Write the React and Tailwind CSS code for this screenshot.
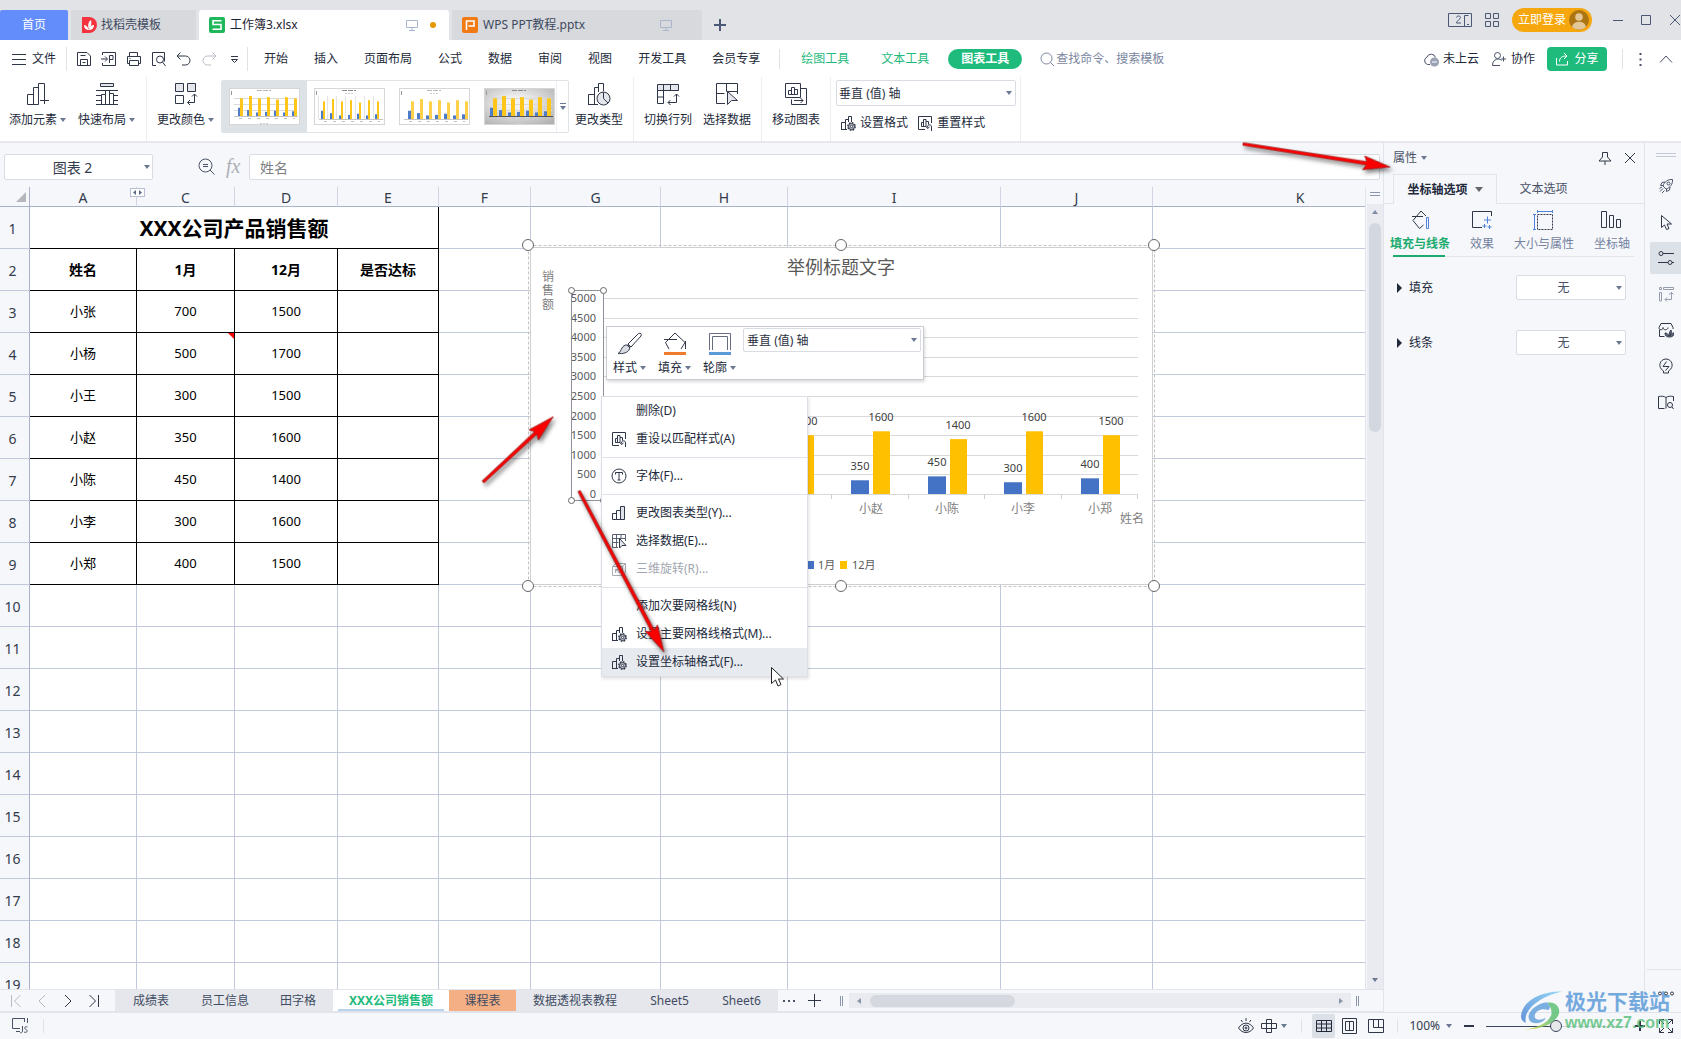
import React from 'react';

const MENUS = ['开始', '插入', '页面布局', '公式', '数据', '审阅', '视图', '开发工具', '会员专享'];

const COLUMNS = [
  { id: 'A', width: 'w-[107px]' },
  { id: 'C', width: 'w-[98px]' },
  { id: 'D', width: 'w-[103px]' },
  { id: 'E', width: 'w-[101px]' },
  { id: 'F', width: 'w-[92px]' },
  { id: 'G', width: 'w-[130px]' },
  { id: 'H', width: 'w-[127px]' },
  { id: 'I', width: 'w-[213px]' },
  { id: 'J', width: 'w-[152px]' },
  { id: 'K', width: '' },
];

const SALES = [
  { name: '小张', jan: 700, dec: 1500 },
  { name: '小杨', jan: 500, dec: 1700 },
  { name: '小王', jan: 300, dec: 1500 },
  { name: '小赵', jan: 350, dec: 1600 },
  { name: '小陈', jan: 450, dec: 1400 },
  { name: '小李', jan: 300, dec: 1600 },
  { name: '小郑', jan: 400, dec: 1500 },
];

const ROW_COUNT = 19;

const SHEETS = [
  { name: '成绩表', cls: 'w-[72px]' },
  { name: '员工信息', cls: 'w-[76px]' },
  { name: '田字格', cls: 'w-[70px]' },
  { name: 'XXX公司销售额', cls: 'w-[116px] bg-white font-bold text-[#1fbb7d]', active: true },
  { name: '课程表', cls: 'w-[67px] bg-[#f4b084]' },
  { name: '数据透视表教程', cls: 'w-[118px]' },
  { name: 'Sheet5', cls: 'w-[71px]' },
  { name: 'Sheet6', cls: 'w-[73px]' },
];

const INK = '#2f3648';

function Icon({ size = 16, color = INK, stroke = 1, className = '', children }) {
  return (
    <svg
      width={size}
      height={size}
      viewBox={`0 0 ${size} ${size}`}
      fill="none"
      stroke={color}
      strokeWidth={stroke}
      className={`shrink-0 ${className}`}
      aria-hidden="true"
    >
      {children}
    </svg>
  );
}

function Caret({ className = '' }) {
  return (
    <svg width="6" height="4" viewBox="0 0 6 4" className={`shrink-0 ${className}`} aria-hidden="true">
      <path d="M0 0h6L3 4z" fill="#6b7892" />
    </svg>
  );
}

function Divider({ className = '' }) {
  return <div className={`w-px shrink-0 bg-[#dfe2e7] ${className}`} />;
}

function Dropdown({ label, value, className = '', selectClass = '' }) {
  return (
    <div className={`relative ${className}`}>
      <select
        aria-label={label}
        className={`block h-full w-full appearance-none rounded-[2px] border border-[#d9dce2] bg-white text-[12px] text-[#2b3142] outline-none ${selectClass}`}
      >
        <option>{value}</option>
      </select>
      <Caret className="pointer-events-none absolute right-[4px] top-1/2 -translate-y-1/2" />
    </div>
  );
}

/* ---------- icons ---------- */

const GEAR = (
  <>
    <circle cx="11.5" cy="11.5" r="3.6" fill="#c9cdd8" stroke={INK} strokeWidth="1.6" strokeDasharray="1.7 1.1" />
    <circle cx="11.5" cy="11.5" r="2.9" fill="#dfe2e8" />
    <circle cx="11.5" cy="11.5" r="1.2" fill="#fff" />
  </>
);

const BarsGearIcon = () => (
  <Icon>
    <path d="M1.5 14.5V7.5h4M5.5 14.5V4.5h3M8.5 7V1.5h3V7M1 14.5h6" />
    {GEAR}
  </Icon>
);

const ResetStyleIcon = () => (
  <Icon>
    <path d="M8 14.5H1.5v-13h13V8" />
    <path d="M4.5 11.500V7.500h2v4zM6.500 11.500v-7H9v7zM9 6.500h2.500v3" />
    <path d="M10.500 12.500v-.5c0-3 4-3 4 0v4M9 11.500l1.500 2 2-1.500" />
  </Icon>
);

const ChartTypeIcon = () => (
  <Icon>
    <path d="M1.500 14.500v-6h4v6zM5.500 14.500v-9h4v9zM9.500 14.500v-13h4v13z" />
    <path d="M10 2h3v12h-3z" fill="#dfe2e8" stroke="none" />
  </Icon>
);

const SelectDataSmallIcon = () => (
  <Icon color="#596175">
    <path d="M7 14.500H1.500v-13h13V8M1.500 5.500h13M1.500 9.500h6M5.500 1.500v13M10 1.500v4" />
    <path d="M8.500 5.500v9.500l2.500-2.500h4z" fill="#e4e6ec" stroke={INK} />
  </Icon>
);

const FontIcon = () => (
  <Icon>
    <circle cx="8" cy="8" r="7" />
    <path d="M4.500 6.500v-2h7v2M8 4.500v7.500M6.500 12h3" />
  </Icon>
);

const RotateIcon = () => (
  <Icon color="#a9adb6">
    <path d="M1.500 5.500h10v9h-10zM1.500 5.500l3-3h10v9l-3 3M11.500 5.500l3-3" />
    <path d="M4.500 12V8.500H8M4.500 8.500L9 12" />
  </Icon>
);

const RIBBON_ICONS = {
  add: (
    <Icon size={24}>
      <path d="M1.500 22.500V12.500h6M7.500 22.500V5.500h5M1.500 22.500h11v-21h6v13M18.500 14v8M14 18.500h9" />
    </Icon>
  ),
  layout: (
    <Icon size={24}>
      <path d="M5.500 1.500h13v3h-13z" fill="#e4e6ec" />
      <path d="M1 8.500h22M1 13.500h5M1 18.500h5M1 22.500h22M6.500 22.500V12.500h4v10M10.500 12.500V8.500h4v14M14.500 11.500h4v11M18 13.500h5M18 18.500h5" />
    </Icon>
  ),
  color: (
    <Icon size={24}>
      <path d="M1.500 1.500h8v8h-8zM13.500 1.500h8v8h-8z" fill="#e4e6ec" />
      <path d="M1.500 13.500h8v8h-8zM20.500 12v8.500h-7M18 14.500l2.500-2.500 2.500 2.500M16 18l-2.500 2.500L16 23" />
    </Icon>
  ),
  type: (
    <Icon size={24}>
      <path d="M1.500 22V12.500h6M7.500 22V5.500h4M1 22.500h10M11.500 10V1.500h5V9" />
      <circle cx="16.500" cy="16.500" r="6.500" fill="#e4e6ec" />
      <path d="M16.500 10v6.500l4.500 4.500" />
    </Icon>
  ),
  swap: (
    <Icon size={24}>
      <path d="M1.500 8.500h6v13h-6z" fill="#fff" />
      <path d="M1.500 2.500h21v6h-21z" fill="#e4e6ec" />
      <path d="M7.500 2.500v6M14.500 2.500v6M1.500 15h6M20.500 12v8.500H12M18 14.500l2.500-2.500 2.500 2.500M14.500 18L12 20.500l2.500 2.500" />
    </Icon>
  ),
  select: (
    <Icon size={24}>
      <path d="M10 21.500H1.500v-20h21V12M1.500 11.500h8M11.500 1.500v8h11" />
      <path d="M12.500 9.500v13l4-4h6z" fill="#e4e6ec" />
    </Icon>
  ),
  move: (
    <Icon size={24}>
      <path d="M16.500 6.500h6v16h-15v-5" />
      <path d="M1.500 1.500h15v14h-15z" fill="#fff" />
      <path d="M4.500 12.500v-4h3v4zM7.500 12.500v-7h3v7zM10.500 12.500v-5h3v5z" />
      <path d="M10 18.500h9M16.500 16l2.500 2.500-2.500 2.500" />
    </Icon>
  ),
};

/* ---------- title bar and menu ---------- */

function ScreenIcon() {
  return (
    <Icon size={12} color="#aab4cc">
      <path d="M.5 1.500h11v7H.5zM6 8.500v3M3 11.500h6" />
    </Icon>
  );
}

function TitleBar() {
  return (
    <header className="flex h-10 shrink-0 items-end bg-[#e1e3e7] text-[12px] text-[#404a60]">
      <button className="h-[30px] w-[68px] shrink-0 rounded-t-[2px] bg-[#628dfa] text-white">首页</button>
      <button className="ml-[3px] flex h-[30px] w-[125px] shrink-0 items-center gap-[4px] rounded-t-[2px] bg-[#d7d9dd] pl-[10px]">
        <svg width="16" height="16" viewBox="0 0 16 16" aria-hidden="true">
          <path d="M1 0h7a8 8 0 0 1 0 16H1z" fill="#f5333f" />
          <path d="M8 13C5 13 3 11 3 8c2 0 4 2 5 5zM8 12C6 8 8 4 10 3c1 3 0 7-2 9zM8 13c1-3 2-5 5-5 0 3-2 5-5 5z" fill="#fff" />
        </svg>
        找稻壳模板
      </button>
      <button className="ml-[3px] flex h-[30px] w-[250px] shrink-0 items-center rounded-t-[3px] bg-white px-[10px] text-[#1c2333]">
        <svg width="16" height="16" viewBox="0 0 16 16" className="mr-[5px]" aria-hidden="true">
          <rect width="16" height="16" rx="2" fill="#1eb75a" />
          <path d="M12.500 3.800H4v3.700h8v4.700H3.500" fill="none" stroke="#fff" strokeWidth="1.600" />
        </svg>
        工作簿3.xlsx
        <span className="ml-auto"><ScreenIcon /></span>
        <span className="ml-[12px] mr-[3px] h-[6px] w-[6px] rounded-full bg-[#e59700]" />
      </button>
      <button className="ml-[3px] flex h-[30px] w-[250px] shrink-0 items-center rounded-t-[3px] bg-[#d7d9dd] px-[10px]">
        <svg width="16" height="16" viewBox="0 0 16 16" className="mr-[5px]" aria-hidden="true">
          <rect width="16" height="16" rx="2" fill="#f27a13" />
          <path d="M4.500 13V4h7.500v5H6.500" fill="none" stroke="#fff" strokeWidth="1.600" />
        </svg>
        WPS PPT教程.pptx
        <span className="ml-auto mr-[20px]"><ScreenIcon /></span>
      </button>
      <button className="ml-[12px] flex h-[30px] items-center" aria-label="新建">
        <Icon size={12} color="#4a5875" stroke={2}>
          <path d="M6 0v12M0 6h12" />
        </Icon>
      </button>

      <div className="ml-auto flex h-10 items-center text-[#4a5875]">
        <svg width="24" height="14" viewBox="0 0 24 14" fill="none" stroke="#4a5875" aria-hidden="true">
          <path d="M.5.5h23v13H.5zM16.500 2.500v11M16.500 2.500h4M19 11.500h2" />
          <path d="M8.500 4.500c0-2 4-2 4 0 0 1.500-4 3.500-4 5.500h4.500" />
        </svg>
        <Icon size={14} color="#4a5875" className="ml-[13px]">
          <path d="M.5.5h5v5h-5zM8.500.5h5v5h-5zM.5 8.500h5v5h-5zM8.500 8.500h5v5h-5z" />
        </Icon>
        <button className="ml-[13px] flex h-6 w-[80px] items-center gap-[3px] rounded-full bg-[#f6a70d] pl-[6px] text-white">
          立即登录
          <svg width="20" height="20" viewBox="0 0 20 20" aria-hidden="true">
            <circle cx="10" cy="10" r="10" fill="#ad7512" />
            <circle cx="10" cy="7" r="3.800" fill="#e2c695" />
            <path d="M3 17c1-7 13-7 14 0a10 10 0 0 1-14 0z" fill="#e2c695" />
          </svg>
        </button>
        <Divider className="ml-[8px] h-5 bg-[#cbcfd7]" />
        <button className="ml-[12px]" aria-label="最小化">
          <Icon size={10} color="#4a5875"><path d="M0 5.500h10" /></Icon>
        </button>
        <button className="ml-[18px]" aria-label="最大化">
          <Icon size={10} color="#4a5875"><path d="M.5.5h9v9h-9z" /></Icon>
        </button>
        <button className="ml-[18px]" aria-label="关闭">
          <Icon size={12} color="#4a5875"><path d="M1 1l10 10M11 1L1 11" /></Icon>
        </button>
      </div>
    </header>
  );
}

function MenuBar() {
  return (
    <nav className="flex h-[37px] shrink-0 items-center whitespace-nowrap bg-white pt-px text-[12px] text-[#22293a]">
      <button className="ml-[12px] flex items-center gap-[6px]">
        <Icon size={14}><path d="M0 2.500h14M0 7.500h14M0 12.500h14" /></Icon>
        文件
      </button>
      <Divider className="ml-[10px] h-6" />
      <div className="ml-[9px] flex items-center gap-[9px]">
        <button aria-label="保存">
          <Icon><path d="M1.500 1.500h9.500l3.500 3.500v9.500H1.500zM4.500 14.500V8.500h7v6M6.500 11.500h3M4.500 4.500h5" /></Icon>
        </button>
        <button aria-label="输出为PDF">
          <Icon><path d="M1.500 4V1.500h13v13h-13V12M0 8h6M4 5.500L6.500 8 4 10.500M8.500 12V4.500h3.500v4H8.500" /></Icon>
        </button>
        <button aria-label="打印">
          <Icon><path d="M3.500 5.500v-4h8v4M3.500 12.500h-2v-7h13v7h-2M3.500 9.500h9v5h-9zM3.500 7.500h1" /></Icon>
        </button>
        <button aria-label="打印预览">
          <Icon><path d="M5 14.500H1.500v-13h12v9" /><circle cx="9" cy="8.500" r="3.500" /><path d="M11.500 11l3 4" /></Icon>
        </button>
        <button aria-label="撤销">
          <Icon><path d="M4.500 1.500L1 5l3.500 3.500M1 5h8.500a4.500 4.500 0 0 1 0 9H6" /></Icon>
        </button>
        <button aria-label="恢复">
          <Icon color="#b9bdc6"><path d="M11.500 1.500L15 5l-3.500 3.500M15 5H6.500a4.500 4.500 0 0 0 0 9H10" /></Icon>
        </button>
        <button aria-label="更多">
          <Icon><path d="M5 5.500h7M5.500 8.500h6l-3 3z" /></Icon>
        </button>
      </div>
      <Divider className="ml-[5px] h-6" />
      <div className="ml-[16px] flex gap-[26px]">
        {MENUS.map((m) => (
          <button key={m}>{m}</button>
        ))}
      </div>
      <Divider className="ml-[19px] h-5" />
      <button className="ml-[21px] text-[#1fbb7d]">绘图工具</button>
      <button className="ml-[32px] text-[#1fbb7d]">文本工具</button>
      <button className="ml-[19px] h-5 w-[74px] rounded-full bg-[#1fbb7d] font-bold text-white">图表工具</button>
      <button className="ml-[18px] flex items-center gap-[2px] text-[#7b86a0]">
        <Icon size={14} color="#7b86a0"><circle cx="6.500" cy="6.500" r="5.500" /><path d="M10.500 10.500l3.500 3.500" /></Icon>
        查找命令、搜索模板
      </button>

      <button className="ml-auto flex items-center gap-[4px]">
        <Icon color="#4a5268">
          <path d="M7 13.500H4.500a4 4 0 0 1-.5-7.500 4.500 4.500 0 0 1 8.500.5" />
          <circle cx="11.500" cy="11" r="4.500" fill="#9aa1b5" stroke="none" />
          <path d="M9 11h5" stroke="#fff" />
        </Icon>
        未上云
      </button>
      <button className="ml-[12px] flex items-center gap-[4px]">
        <Icon color="#4a5268">
          <circle cx="6.500" cy="4.500" r="3" />
          <path d="M9 14.500H1.500c0-8 8-7 9-5M12.500 5.500v5M10 8h5" />
        </Icon>
        协作
      </button>
      <button className="ml-[12px] flex h-6 w-[60px] items-center justify-center gap-[5px] rounded-[4px] bg-[#1fbb7d] text-white">
        <Icon size={14} color="#fff"><path d="M1.500 6v7h11V9M4.500 9.500c0-4 3-5.500 7-5.500M9 1l3 3-3 3" /></Icon>
        分享
      </button>
      <Divider className="ml-[15px] h-5" />
      <button className="ml-[16px]" aria-label="更多选项">
        <svg width="3" height="13" viewBox="0 0 3 13" fill="#4a5268" aria-hidden="true">
          <path d="M.5 0h2v2h-2zM.5 5.500h2v2h-2zM.5 11h2v2h-2z" />
        </svg>
      </button>
      <button className="ml-[17px] mr-[8px]" aria-label="折叠功能区">
        <Icon size={14} color="#4a5268"><path d="M1 10.500l6-6.500 6 6.500" /></Icon>
      </button>
    </nav>
  );
}

/* ---------- ribbon ---------- */

function RibbonButton({ icon, label, caret, className = '' }) {
  return (
    <button className={`flex shrink-0 flex-col items-center pt-[5px] ${className}`}>
      {RIBBON_ICONS[icon]}
      <span className="mt-[4px] flex items-center gap-[3px] leading-5">
        {label}
        {caret && <Caret />}
      </span>
    </button>
  );
}

const THUMBS = [
  { id: 1, start: 9, base: 28, blue: 2, gold: 3, title: '#b5b5b5', rows: true },
  { id: 2, start: 7, base: 31, blue: 2, gold: 2, title: '#8d8d8d', columns: true },
  { id: 3, start: 9, base: 31, blue: 3, gold: 3, title: '#b5b5b5', hatch: true },
  { id: 4, start: 6, base: 28, blue: 3, gold: 4, title: '#8d8d8d', rows: true, dark: true },
];

function StyleThumb({ thumb }) {
  const { start, base, blue, gold } = thumb;
  return (
    <svg width="71" height="37" viewBox="0 0 71 37" aria-hidden="true">
      <defs>
        <radialGradient id="thumbGlow" cx="0.450" cy="0.400" r="0.750">
          <stop offset="0.200" stopColor="#f2f2f2" />
          <stop offset="1" stopColor="#b0b0b0" />
        </radialGradient>
      </defs>
      <rect x="0.500" y="0.500" width="70" height="36" fill={thumb.dark ? 'url(#thumbGlow)' : '#fff'} stroke="#d6d6d6" />
      <path d="M28 2.500h14" stroke={thumb.title} strokeDasharray="5 1" />
      {base === 31 && <path d="M31 5.500h8" stroke="#d0d0d0" strokeDasharray="2 1" />}
      <path d="M2.500 3v4" stroke="#999" />
      {thumb.rows && <path d="M5 10.500h63M5 16.500h63M5 22.500h63" stroke="#dadada" />}
      {thumb.columns && <path d="M4.500 8v23M13.500 8v23M22.500 8v23M31.500 8v23M41.500 8v23M50.500 8v23M59.500 8v23" stroke="#e3e3e3" />}
      {SALES.map((s, i) => (
        <g key={s.name}>
          <rect x={start + i * 9} y={base - s.jan / 85} width={blue} height={s.jan / 85} fill="#4f7cc8" />
          <rect x={start + blue + i * 9} y={base - s.dec / 85} width={gold} height={s.dec / 85} fill={thumb.hatch ? '#ffd04a' : '#ffc61a'} />
        </g>
      ))}
      <path d={`M5 ${base + 0.5}h64`} stroke={thumb.dark ? '#555' : '#c4c4c4'} />
      <path d={`M10 ${base + 2.5}h56`} stroke="#c4c4c4" strokeDasharray="3 6" />
      {base === 28 && <path d="M31 35.500h8" stroke="#cfcfcf" strokeDasharray="2 1" />}
    </svg>
  );
}

function Ribbon() {
  return (
    <div className="flex h-[66px] shrink-0 border-b-2 border-[#e6e8eb] bg-white pl-[9px] text-[12px] text-[#22293a]">
      <RibbonButton icon="add" label="添加元素" caret />
      <RibbonButton icon="layout" label="快速布局" caret className="ml-[12px]" />
      <Divider className="ml-[11px] bg-[#eceef1]" />
      <RibbonButton icon="color" label="更改颜色" caret className="ml-[10px]" />
      <div className="ml-[7px] mt-[3px] flex h-[53px] w-[348px] shrink-0 items-stretch rounded-[2px] border border-[#dfe2e7]">
        {THUMBS.map((t) => (
          <button
            key={t.id}
            aria-label={`样式 ${t.id}`}
            className={`flex items-center justify-center ${t.id === 1 ? 'w-[85px] bg-[#dde2e7]' : 'w-[85px]'} ${t.id === 4 ? 'pr-px' : ''}`}
          >
            <StyleThumb thumb={t} />
          </button>
        ))}
        <button className="-ml-[6px] flex flex-1 items-center justify-center border-l border-[#eceef1]" aria-label="更多样式">
          <svg width="6" height="7" viewBox="0 0 6 7" aria-hidden="true">
            <path d="M0 0h6v1H0zM0 3h6L3 7z" fill="#6b7892" />
          </svg>
        </button>
      </div>
      <RibbonButton icon="type" label="更改类型" className="ml-[6px]" />
      <Divider className="ml-[10px] bg-[#eceef1]" />
      <RibbonButton icon="swap" label="切换行列" className="ml-[10px]" />
      <RibbonButton icon="select" label="选择数据" className="ml-[11px]" />
      <Divider className="ml-[10px] bg-[#eceef1]" />
      <RibbonButton icon="move" label="移动图表" className="ml-[10px]" />
      <Divider className="ml-[10px] bg-[#eceef1]" />
      <div className="ml-[5px] mt-[3px]">
        <Dropdown label="图表元素" value="垂直 (值) 轴" className="h-[26px] w-[180px]" selectClass="pl-[2px] pt-px" />
        <div className="mt-[7px] flex gap-[9px] pl-[4px]">
          <button className="flex items-center gap-[4px] leading-5"><BarsGearIcon />设置格式</button>
          <button className="flex items-center gap-[4px] leading-5"><ResetStyleIcon />重置样式</button>
        </div>
      </div>
      <Divider className="ml-[4px] bg-[#eceef1]" />
    </div>
  );
}

/* ---------- sheet ---------- */

function FormulaBar() {
  return (
    <div className="flex h-[44px] shrink-0 items-start pl-[4px] pr-[3px] pt-[11px]">
      <div className="relative h-[26px] w-[149px] shrink-0">
        <input
          aria-label="名称框"
          defaultValue="图表 2"
          className="h-full w-full rounded-[2px] border border-[#d9dce2] bg-white pr-[12px] text-center text-[14px] text-[#333b4d] outline-none"
        />
        <Caret className="pointer-events-none absolute right-[3px] top-[11px]" />
      </div>
      <Icon size={17} color="#4a5268" className="ml-[45px] mt-[4px]">
        <circle cx="7.500" cy="7.500" r="6.500" />
        <path d="M12 12l4.500 4.500M5 6.500h5M5 8.500h5" />
      </Icon>
      <span className="ml-[11px] w-[22px] font-['Liberation_Serif',serif] text-[20px] italic leading-6 text-[#adb0b6]">fx</span>
      <input
        aria-label="编辑栏"
        defaultValue="姓名"
        className="ml-px h-[26px] min-w-0 flex-1 rounded-[2px] border border-[#d9dce2] bg-white pl-[10px] text-[14px] text-[#7d7f84] outline-none"
      />
    </div>
  );
}

function SheetRow({ row }) {
  const sale = SALES[row - 3];
  const grid = 'border-b border-r border-[#c3c9dc]';
  const boxed = 'border-b border-r border-black';
  let cells;
  if (row === 1) {
    cells = <td colSpan={4} className={`${boxed} text-[21px] font-bold leading-6`}>XXX公司产品销售额</td>;
  } else if (row === 2) {
    cells = ['姓名', '1月', '12月', '是否达标'].map((t) => (
      <td key={t} className={`${boxed} text-[14px] font-bold`}>{t}</td>
    ));
  } else if (sale) {
    cells = (
      <>
        <td className={boxed}>{sale.name}</td>
        <td className={`${boxed} relative`}>
          {sale.jan}
          {row === 4 && <span className="absolute right-0 top-0 border-l-[6px] border-t-[6px] border-l-transparent border-t-[#f00]" />}
        </td>
        <td className={boxed}>{sale.dec}</td>
        <td className={boxed} />
      </>
    );
  } else {
    cells = COLUMNS.slice(0, 4).map((c) => <td key={c.id} className={grid} />);
  }
  return (
    <tr className="h-[42px]">
      <th scope="row" className="border-b border-r border-b-[#c3c9dc] border-r-[#a8b3cb] bg-[#f5f7fa] pb-0 pl-0 pr-[4px] pt-[2px] text-[14px] font-normal text-[#333b4d]">
        {row}
      </th>
      {cells}
      {COLUMNS.slice(4).map((c) => <td key={c.id} className={grid} />)}
    </tr>
  );
}

// The last column runs on past the right edge of the viewport.
function SheetTable() {
  return (
    <table className="w-[calc(100%+83px)] table-fixed border-separate border-spacing-0 bg-white text-center text-[13px] text-black">
      <colgroup>
        <col className="w-[30px]" />
        {COLUMNS.map((c) => <col key={c.id} className={c.width} />)}
      </colgroup>
      <thead>
        <tr className="h-5 bg-[#f5f7fa] text-[14px] leading-[17px] text-[#333b4d]">
          <th className="border-b border-r border-[#a8b3cb] p-0">
            <svg width="10" height="10" viewBox="0 0 10 10" className="ml-auto mr-[3px]" aria-hidden="true">
              <path d="M10 0v10H0z" fill="#b4b7bc" />
            </svg>
          </th>
          {COLUMNS.map((c) => (
            <th key={c.id} scope="col" className="border-b border-r border-b-[#a8b3cb] border-r-[#cfd5e3] px-0 pb-0 pt-[2px] font-normal">{c.id}</th>
          ))}
        </tr>
      </thead>
      <tbody>
        {Array.from({ length: ROW_COUNT }, (_, i) => <SheetRow key={i} row={i + 1} />)}
      </tbody>
    </table>
  );
}

const PLOT_LEFT = 83;
const PLOT_RIGHT = 618;
const AXIS_Y = 259;
const TICK = 19.6;

// Bar chart drawn in its own coordinate space, origin at the top left of the frame.
function SalesChart() {
  const step = (PLOT_RIGHT - PLOT_LEFT) / SALES.length;
  const barHeight = (v) => (v / 500) * TICK;
  return (
    <svg width="645" height="362" viewBox="0 0 645 362" className="absolute left-[520px] top-[48px]" role="img" aria-label="举例标题文字">
      <rect x="10.500" y="12.500" width="622" height="337" fill="#fff" stroke="#d0d0d0" />
      <rect x="8.500" y="10.500" width="626" height="341" fill="none" stroke="#c4c4c4" strokeDasharray="3 2" />
      <text x="321" y="39" textAnchor="middle" fontSize="18" fill="#595959">举例标题文字</text>
      {['销', '售', '额'].map((ch, i) => (
        <text key={ch} x="28" y={46 + i * 14} textAnchor="middle" fontSize="12" fill="#7f7f7f">{ch}</text>
      ))}
      {Array.from({ length: 11 }, (_, i) => {
        const y = Math.round(AXIS_Y - i * TICK) + 0.5;
        return (
          <g key={i}>
            <path d={`M${PLOT_LEFT} ${y}H${PLOT_RIGHT}`} stroke="#d9d9d9" />
            <text x="76" y={y + 3.5} textAnchor="end" fontSize="11" fill="#595959">{i * 500}</text>
          </g>
        );
      })}
      {SALES.map((s, i) => {
        const x = PLOT_LEFT + i * step;
        return (
          <g key={s.name} textAnchor="middle" fontSize="11" fill="#404040">
            <path d={`M${Math.round(x + step) - 0.5} ${AXIS_Y}v5`} stroke="#d0d0d0" />
            <rect x={Math.round(x + 19)} y={AXIS_Y - barHeight(s.jan)} width="18" height={barHeight(s.jan)} fill="#4472c4" />
            <rect x={Math.round(x + 41)} y={AXIS_Y - barHeight(s.dec)} width="17" height={barHeight(s.dec)} fill="#ffc000" />
            <text x={Math.round(x + 28)} y={AXIS_Y - barHeight(s.jan) - 10}>{s.jan}</text>
            <text x={Math.round(x + 49)} y={AXIS_Y - barHeight(s.dec) - 10}>{s.dec}</text>
            <text x={Math.round(x + step / 2)} y="278" fontSize="12" fill="#7f7f7f">{s.name}</text>
          </g>
        );
      })}
      <text x="600" y="288" fontSize="12" fill="#7f7f7f">姓名</text>
      <rect x="287" y="326" width="7" height="8" fill="#4472c4" />
      <text x="298" y="334" fontSize="11" fill="#595959">1月</text>
      <rect x="320" y="326" width="7" height="8" fill="#ffc000" />
      <text x="332" y="334" fontSize="11" fill="#595959">12月</text>

      <rect x="51.500" y="55.500" width="32" height="210" fill="none" stroke="#8f929b" />
      <g fill="#fff" stroke="#666">
        <circle cx="51.500" cy="55.500" r="3" />
        <circle cx="83.500" cy="55.500" r="3" />
        <circle cx="51.500" cy="265.500" r="3" />
        <circle cx="83.500" cy="265.500" r="3" />
        {[8, 321, 634].map((x) => (
          <g key={x}>
            <circle cx={x} cy="10" r="5.500" />
            <circle cx={x} cy="351" r="5.500" />
          </g>
        ))}
      </g>
    </svg>
  );
}

function MiniToolbar() {
  const tools = [
    {
      label: '样式',
      icon: (
        <Icon size={26}>
          <path d="M11 13L21.500 2.500c2-1 3.500.5 2.500 2.500L14 16z" />
          <path d="M1 22.500c3-1 3-7 7.500-8.500 3-.5 5 2 4 4-1.500 4-7 5-11.500 4.500z" fill="#d9dce3" />
          <path d="M10 14l3 3" />
        </Icon>
      ),
    },
    {
      label: '填充',
      icon: (
        <Icon size={26}>
          <path d="M7 18L3.500 11.500 13 2l10 9.500-4 6.500M2 8.500h13M23.500 10v8M9 6L13 2" />
          <path d="M2 21h22v3H2z" fill="#f07c2d" stroke="none" />
        </Icon>
      ),
    },
    {
      label: '轮廓',
      icon: (
        <Icon size={26}>
          <path d="M2.500 19V2.500h21V19M5.500 19V5.500h15V19" stroke="#656c7f" />
          <path d="M2 21h22v3H2z" fill="#5b9bd5" stroke="none" />
        </Icon>
      ),
    },
  ];
  return (
    <div className="absolute left-[606px] top-[139px] flex h-[54px] w-[318px] border border-[#c9ccd3] bg-white pl-[6px] text-[12px] text-[#22293a] shadow-[1px_2px_3px_rgba(0,0,0,0.15)]">
      <div className="flex gap-[12px]">
        {tools.map((t) => (
          <button key={t.label} className="flex flex-col items-center pt-[4px]">
            {t.icon}
            <span className="flex items-center gap-[3px] leading-[22px]">{t.label}<Caret /></span>
          </button>
        ))}
      </div>
      <Dropdown label="所选元素" value="垂直 (值) 轴" className="ml-[7px] mr-[2px] mt-px h-[24px] flex-1" selectClass="pl-[3px] pt-px" />
    </div>
  );
}

const MENU_GROUPS = [
  [{ text: '删除(D)' }, { text: '重设以匹配样式(A)', icon: <ResetStyleIcon /> }],
  [{ text: '字体(F)...', icon: <FontIcon /> }],
  [
    { text: '更改图表类型(Y)...', icon: <ChartTypeIcon /> },
    { text: '选择数据(E)...', icon: <SelectDataSmallIcon /> },
    { text: '三维旋转(R)...', icon: <RotateIcon />, disabled: true },
  ],
  [
    { text: '添加次要网格线(N)' },
    { text: '设置主要网格线格式(M)...', icon: <BarsGearIcon /> },
    { text: '设置坐标轴格式(F)...', icon: <BarsGearIcon />, active: true },
  ],
];

function ContextMenu() {
  return (
    <div role="menu" className="absolute left-[601px] top-[209px] w-[207px] border border-[#dcdfe6] bg-white text-[12px] text-[#22293a] shadow-[1px_2px_3px_rgba(0,0,0,0.12)]">
      {MENU_GROUPS.map((group, i) => (
        <div key={group[0].text} className={i ? 'mt-[4px] border-t border-[#dfe2e8] pt-[4px]' : ''}>
          {group.map((item) => (
            <button
              key={item.text}
              role="menuitem"
              disabled={item.disabled}
              className={`flex h-7 w-full items-center pl-[9px] text-left ${item.active ? 'bg-[#e7eaef]' : ''} ${item.disabled ? 'text-[#a3a7b0]' : ''}`}
            >
              <span className="mr-[9px] w-4 shrink-0">{item.icon}</span>
              {item.text}
            </button>
          ))}
        </div>
      ))}
    </div>
  );
}

function VerticalScroll() {
  return (
    <div className="flex w-[18px] shrink-0 flex-col border-l border-[#e1e4ea] bg-[#f5f7fa] pl-px">
      <div className="mx-[3px] mb-[8px] mt-[5px] h-[4px] border-y border-[#8b96ad]" />
      <div className="flex flex-1 flex-col items-center bg-[#e9ebf0]">
        <svg width="6" height="4" viewBox="0 0 6 4" className="mb-[9px] mt-[6px]" aria-hidden="true"><path d="M3 0l3 4H0z" fill="#7f8da8" /></svg>
        <div className="h-[209px] w-[12px] rounded-full bg-[#d3d7df]" />
        <Caret className="mb-[7px] mt-auto" />
      </div>
    </div>
  );
}

function SheetTabs() {
  return (
    <div className="flex h-[23px] shrink-0 items-stretch border-y border-[#e1e4ea] text-[12px] text-[#414c63]">
      <div className="flex w-[115px] shrink-0 items-center gap-[12px] pl-[9px]">
        <button aria-label="第一张"><Icon size={14} color="#b4b9c4"><path d="M2.500 1v12M11.500 1l-6 6 6 6" /></Icon></button>
        <button aria-label="上一张"><Icon size={14} color="#b4b9c4"><path d="M10 1L4 7l6 6" /></Icon></button>
        <button aria-label="下一张"><Icon size={14}><path d="M4 1l6 6-6 6" /></Icon></button>
        <button aria-label="最后一张"><Icon size={14}><path d="M2.500 1l6 6-6 6M11.500 1v12" /></Icon></button>
      </div>
      <div className="flex shrink-0 bg-[#e6e7ec]">
        {SHEETS.map((s) => (
          <button key={s.name} className={`relative whitespace-nowrap pt-px ${s.cls}`}>
            {s.name}
            {s.active && <span className="absolute inset-x-[5px] bottom-0 h-[2px] bg-[#b9d3ee]" />}
          </button>
        ))}
      </div>
      <button className="ml-[5px] flex items-center" aria-label="更多工作表">
        <svg width="12" height="2" viewBox="0 0 12 2" fill="#4a5268" aria-hidden="true"><path d="M0 0h2v2H0zM5 0h2v2H5zM10 0h2v2h-2z" /></svg>
      </button>
      <button className="ml-[13px] flex items-center" aria-label="新建工作表">
        <Icon size={13}><path d="M6.500 0v13M0 6.500h13" /></Icon>
      </button>
      <div className="ml-[19px] h-[10px] w-[3px] self-center border-x border-[#8b96ad]" />
      <div className="my-[3px] ml-[6px] flex flex-1 items-center bg-[#e9ebf0] px-[8px]">
        <svg width="4" height="6" viewBox="0 0 4 6" aria-hidden="true"><path d="M4 0v6L0 3z" fill="#8b96ad" /></svg>
        <div className="ml-[9px] h-[12px] w-[145px] rounded-full bg-[#d5d8df]" />
        <svg width="4" height="6" viewBox="0 0 4 6" className="ml-auto" aria-hidden="true"><path d="M0 0v6l4-3z" fill="#8b96ad" /></svg>
      </div>
      <div className="ml-[5px] mr-[24px] h-[10px] w-[3px] self-center border-x border-[#8b96ad]" />
    </div>
  );
}

/* ---------- side panel ---------- */

const PANEL_TABS = [
  {
    label: '填充与线条',
    active: true,
    icon: (
      <Icon size={22}>
        <path d="M4 11.500L12 2l5 5M4 11.500l6.500 8 4-3.500M3 7.500h11" />
        <path d="M17.500 8.500h2v11h-2z" stroke="#4f82dd" />
      </Icon>
    ),
  },
  {
    label: '效果',
    icon: (
      <Icon size={22}>
        <path d="M11 18.500H1.500v-16h19V7" />
        <path d="M16.500 7.500v7M13 11h7M13.500 15v4M11.500 17h4M18.500 16v4M16.500 18h4" stroke="#4f82dd" />
      </Icon>
    ),
  },
  {
    label: '大小与属性',
    icon: (
      <Icon size={22}>
        <path d="M4.500 5.500h15v15h-15z" strokeDasharray="2 1" />
        <path d="M4.500 2.500h15M4.500 1v3M19.500 1v3M1.500 5.500v15M0 5.500h3M0 20.500h3" stroke="#4f82dd" />
      </Icon>
    ),
  },
  {
    label: '坐标轴',
    icon: (
      <Icon size={22}>
        <path d="M.5 2.500h5v16H.5zM8.500 6.500h4v12h-4zM15.500 10.500h4v8h-4z" />
      </Icon>
    ),
  },
];

function PropertyRow({ label }) {
  return (
    <div className="flex items-center pl-[13px] pr-[18px]">
      <svg width="5" height="10" viewBox="0 0 5 10" aria-hidden="true"><path d="M0 0l5 5-5 5z" fill="#22293a" /></svg>
      <span className="ml-[7px] text-[12px] text-[#22293a]">{label}</span>
      <Dropdown label={label} value="无" className="ml-auto h-[25px] w-[110px]" selectClass="pr-[15px] text-center text-[#4a5268]" />
    </div>
  );
}

function PropertyPanel() {
  return (
    <aside className="w-[261px] shrink-0 border-l border-[#e1e4ea] text-[12px]">
      <div className="flex h-[31px] items-center pb-[2px] pl-[9px] pr-[8px] text-[#4a5268]">
        属性
        <Caret className="ml-[4px]" />
        <button className="ml-auto" aria-label="固定">
          <Icon size={14}><path d="M4.500 1.500h5v4.500l3.500 4H1l3.500-4zM7 10v4" /></Icon>
        </button>
        <button className="ml-[12px]" aria-label="关闭面板">
          <Icon size={12}><path d="M1 1l10 10M11 1L1 11" /></Icon>
        </button>
      </div>
      <div className="flex h-[30px]">
        <div className="w-[9px] border-b border-[#e1e4ea]" />
        <button className="flex w-[104px] items-center justify-center gap-[7px] border-x border-t border-[#e1e4ea] font-bold text-[#22293a]">
          坐标轴选项
          <svg width="8" height="5" viewBox="0 0 8 5" aria-hidden="true"><path d="M0 0h8L4 5z" fill="#666" /></svg>
        </button>
        <button className="flex-1 border-b border-[#e1e4ea] pr-[54px] pt-px text-[#4a5268]">文本选项</button>
      </div>
      <div className="ml-[6px] mr-[14px] flex justify-between">
        {PANEL_TABS.map((t) => (
          <button
            key={t.label}
            className={`flex flex-col items-center pt-[5px] ${t.active ? 'font-bold text-[#1cab6f]' : 'text-[#7482a0]'}`}
          >
            {t.icon}
            <span className="mt-[3px] leading-5">{t.label}</span>
          </button>
        ))}
      </div>
      <div className="ml-[9px] mr-[10px] flex h-[4px] items-center">
        <div className="h-[2px] w-[52px] bg-[#1cab6f]" />
        <div className="h-px flex-1 bg-[#e1e4ea]" />
      </div>
      <div className="mt-[17px] flex flex-col gap-[30px]">
        <PropertyRow label="填充" />
        <PropertyRow label="线条" />
      </div>
    </aside>
  );
}

function SideBar() {
  const tools = [
    <Icon key="rocket" color="#4a5268">
      <path d="M5 8c1-4 5-7 9.500-6.500C15 6 12 10 8 11zM5 7.500H2.500L4 4.500l3-.5M8.500 11v2.500l3-1.500.5-3M1.500 10.500L4 9M2 13.500l3-3M4 15l2.500-2.500" />
      <circle cx="10.500" cy="5.500" r="1.500" />
    </Icon>,
    <Icon key="cursor"><path d="M3.500 1.500v12l3-2.500 2 4.500 2.500-1-2-4.500h4.500z" /></Icon>,
    <Icon key="props">
      <circle cx="3" cy="3.500" r="2" /><path d="M5 3.500h11" /><circle cx="12" cy="12.500" r="2" /><path d="M0 12.500h10M14 12.500h2" />
    </Icon>,
    <Icon key="pivot" color="#969dac">
      <path d="M1.500 1.500h2v2h-2zM5.500 1.500h10v2h-10zM1.500 6.500h2v8.500h-2zM13.500 6.500v7H7M11 8.500l2.500-2 2 2M9 11.500l-2 2 2 2" />
    </Icon>,
    <Icon key="shop">
      <path d="M1.500 7.500v7h5M1 5.500l2-4h10l2 4M1 5.500c0 3 4 3 4 0 0 3 5 3 5 0M15 5.500V7" />
      <path d="M7 11c2 0 3 1 4 3 0-3 1-5 2-6 1 2 0 4-1 6 1-2 2-3 4-3 0 3-2 4-4.500 4S7 14 7 11z" fill="#6a7182" />
    </Icon>,
    <Icon key="bulb">
      <path d="M5.500 13C-1 9 2 1 8 1s9 8 2.500 12v2h-5z" /><path d="M8.500 3.500L5 8.500h6l-3.500 4" />
    </Icon>,
    <Icon key="book">
      <path d="M8 3.500C6 2 3 2 .5 2.500v12h6M8 3.500c2-1.500 5-1.500 7.500-1V7M8 3.500v11" /><circle cx="12" cy="11" r="2.500" /><path d="M14 13l1.500 2" />
    </Icon>,
  ];
  return (
    <aside className="flex w-[37px] shrink-0 flex-col items-end border-l border-[#e1e4ea]">
      <div className="mr-[5px] mt-[10px] h-[4px] w-5 border-y border-[#c3c9d5]" />
      <div className="mt-[13px] flex flex-col gap-[4px]">
        {tools.map((icon) => (
          <button
            key={icon.key}
            aria-label={icon.key}
            className={`flex h-8 w-[31px] items-center justify-center ${icon.key === 'props' ? 'rounded-l-[2px] bg-[#dce0e7]' : ''}`}
          >
            {icon}
          </button>
        ))}
      </div>
      <div className="mt-auto h-[43px] w-[34px] border-t border-[#e1e4ea] pl-[11px] pt-[21px]">
        <Icon><circle cx="2" cy="2.500" r="1.500" /><circle cx="8" cy="2.500" r="1.500" /><circle cx="14" cy="2.500" r="1.500" /></Icon>
      </div>
    </aside>
  );
}

/* ---------- status bar ---------- */

function StatusBar() {
  return (
    <footer className="flex h-[26px] shrink-0 items-center text-[12px] text-[#333b4d]">
      <Icon color="#4a5268" className="ml-[12px]">
        <path d="M8 10.500H.5v-10h12M4 13.500h4M12.500 0v4M15.500 0v5M10.500 8v5c0 2-2 2-2.500 1.500M15.500 9c-3-1.500-3.500 2-1.500 2.500s1.500 4-2 2.500" />
      </Icon>
      <Divider className="ml-[15px] h-[14px]" />

      <div className="ml-auto flex items-center">
        <button aria-label="护眼模式">
          <Icon><path d="M.5 10c4-6.500 11-6.500 15 0-4 6-11 6-15 0zM8 0v3M3 2l1.500 2M13 2l-1.500 2" /><circle cx="8" cy="10" r="3" /><circle cx="8" cy="10" r="1" /></Icon>
        </button>
        <button className="ml-[7px] flex items-center gap-[4px]" aria-label="阅读模式">
          <Icon><path d="M5.500 1.500h5v13h-5zM.5 5.500h15v5H.5z" /></Icon>
          <Caret />
        </button>
        <Divider className="ml-[14px] h-[14px]" />
        <button className="ml-[10px] flex h-6 w-[23px] items-center justify-center rounded-[2px] bg-[#dbdfe6]" aria-label="普通视图">
          <Icon><path d="M.5 2.500h15v11H.5zM.5 6h15M.5 10h15M5.500 2.500v11M10.500 2.500v11" stroke="#22293a" /></Icon>
        </button>
        <button className="ml-[7px]" aria-label="分页预览">
          <Icon><path d="M.5.500h14v15H.5zM3.500 3.500h8v9h-8zM7.500 3.500v9" /></Icon>
        </button>
        <button className="ml-[10px]" aria-label="页面布局视图">
          <Icon><path d="M.5 1.500h15v13H.5zM5.500 1.500v8M5.500 9.500h10M10.500 1.500v8" /></Icon>
        </button>
        <Divider className="ml-[13px] h-[14px]" />
        <button className="ml-[11px] flex items-center gap-[6px]">100%<Caret /></button>
        <button className="ml-[12px]" aria-label="缩小"><Icon size={10} stroke={2}><path d="M0 5h10" /></Icon></button>
        <input
          type="range"
          aria-label="缩放"
          defaultValue="49"
          className="ml-[12px] h-3 w-[142px] appearance-none bg-[linear-gradient(to_right,#3a4560_50%,#cdd2da_50%)] bg-[length:100%_1px] bg-center bg-no-repeat [&::-webkit-slider-thumb]:h-3 [&::-webkit-slider-thumb]:w-3 [&::-webkit-slider-thumb]:appearance-none [&::-webkit-slider-thumb]:rounded-full [&::-webkit-slider-thumb]:border [&::-webkit-slider-thumb]:border-[#3a4560] [&::-webkit-slider-thumb]:bg-[#e8e9eb]"
        />
        <button className="ml-[7px]" aria-label="放大"><Icon size={10} stroke={2}><path d="M0 5h10M5 0v10" /></Icon></button>
        <button className="ml-[14px] mr-[8px]" aria-label="全屏">
          <Icon size={14}><path d="M9 .5h4.500V5M13.500.5L9 5M5 .5H.5V5M.5.5L5 5M9 13.500h4.500V9M13.500 13.500L9 9M5 13.500H.5V9M.5 13.500L5 9" /></Icon>
        </button>
      </div>
    </footer>
  );
}

/* ---------- annotations ---------- */

function Arrow({ from, to }) {
  const dx = to[0] - from[0];
  const dy = to[1] - from[1];
  const len = Math.round(Math.hypot(dx, dy));
  const angle = (Math.atan2(dy, dx) * 180) / Math.PI;
  return (
    <g transform={`translate(${from[0]} ${from[1]}) rotate(${angle})`}>
      <path
        d={`M0 -1.300L${len - 24} -1.800L${len - 27} -7L${len} 0L${len - 27} 7L${len - 24} 1.800L0 1.300z`}
        fill="#f90000"
        stroke="#8f1a1a"
        strokeWidth="0.600"
      />
    </g>
  );
}

function Annotations() {
  return (
    <svg className="pointer-events-none absolute inset-0 h-full w-full" aria-hidden="true">
      <g className="drop-shadow-[2px_3px_2px_rgba(0,0,0,0.5)]">
        <Arrow from={[1243, 144]} to={[1390, 167]} />
        <Arrow from={[483, 482]} to={[553, 417]} />
        <Arrow from={[579, 491]} to={[664, 652]} />
      </g>
      <path d="M771.500 667.500v16l4-3.500 2.500 6 3-1.500-2.500-5.500h5z" fill="#fff" stroke="#222" />
    </svg>
  );
}

function Watermark() {
  return (
    <div className="pointer-events-none absolute bottom-[6px] right-[11px] flex items-center gap-[2px] opacity-80">
      <svg width="43" height="42" viewBox="0 0 44 42" aria-hidden="true">
        <defs>
          <linearGradient id="swirlBlue" x1="0" y1="1" x2="1" y2="0">
            <stop offset="0" stopColor="#3f7bd0" />
            <stop offset="1" stopColor="#7fd0f5" />
          </linearGradient>
          <linearGradient id="swirlGreen" x1="0" y1="1" x2="1" y2="0">
            <stop offset="0" stopColor="#e3dc45" />
            <stop offset="0.600" stopColor="#55bd6c" />
          </linearGradient>
        </defs>
        <path d="M43 1C22 0 2 11 1 26c0 4 2 6 5 7C3 20 20 6 43 1z" fill="url(#swirlBlue)" />
        <path d="M27 12c-12 2-22 12-17 19 5 5 15 2 16-3-4 3-11 3-11-2 1-6 8-8 14-6 4-4 0-7-2-8z" fill="#5f9edc" />
        <path d="M28 12c8 0 13 4 12 11C37 34 22 40 4 40c15-2 25-7 28-15 1-5-1-9-4-13z" fill="url(#swirlGreen)" />
      </svg>
      <div className="whitespace-nowrap font-bold">
        <div className="text-[21px] leading-6 text-[#5596d8]">极光下载站</div>
        <div className="font-['Liberation_Sans','Noto_Sans_CJK_SC',sans-serif] text-[16px] leading-5 text-[#56bf78]">www.xz7.com</div>
      </div>
    </div>
  );
}

export default function App() {
  return (
    <div className="relative flex h-screen w-full flex-col overflow-hidden bg-[#f5f7fa] font-['Noto_Sans','Noto_Sans_CJK_SC',sans-serif]">
      <TitleBar />
      <MenuBar />
      <Ribbon />
      <div className="flex min-h-0 flex-1 border-b border-[#e1e4ea]">
        <main className="flex min-w-0 flex-1 flex-col">
          <FormulaBar />
          <div className="flex min-h-0 flex-1">
            <div className="relative min-w-0 flex-1 overflow-hidden">
              <SheetTable />
              <div className="absolute left-[130px] top-px flex h-[9px] w-[15px] items-center justify-center border border-[#b5bed2] bg-white">
                <svg width="9" height="5" viewBox="0 0 9 5" fill="#5c6a87" aria-hidden="true"><path d="M3 0v5L0 2.500zM6 0v5l3-2.500z" /></svg>
              </div>
              <SalesChart />
              <MiniToolbar />
              <ContextMenu />
            </div>
            <VerticalScroll />
          </div>
          <SheetTabs />
        </main>
        <PropertyPanel />
        <SideBar />
      </div>
      <StatusBar />
      <Annotations />
      <Watermark />
    </div>
  );
}
